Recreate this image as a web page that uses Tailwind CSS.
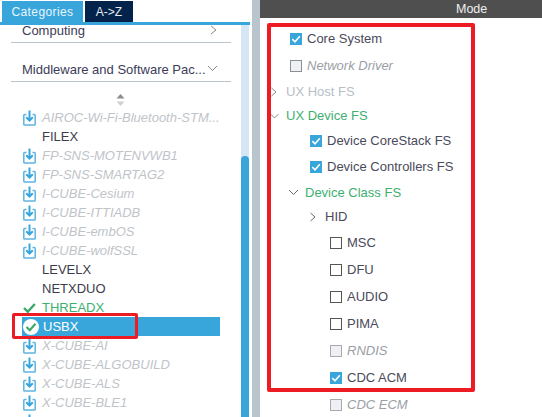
<!DOCTYPE html>
<html lang="en">
<head>
    <meta charset="UTF-8">
    <meta name="viewport" content="width=device-width, initial-scale=1.0">
    <title>Middleware</title>
    <script src="https://cdn.jsdelivr.net/npm/@tailwindcss/browser@4"></script>
</head>
<body class="bg-white">
<svg class="hidden">
    <symbol id="dl" viewBox="0 0 13 16">
        <path d="M3.5 4.5H1.7Q.8 4.5.8 5.4V14.2Q.8 15.1 1.7 15.1H11.3Q12.2 15.1 12.2 14.2V5.4Q12.2 4.5 11.3 4.5H9.5" fill="none" stroke="#5eb4e2" stroke-width="1.5"/>
        <path d="M6.5 0.5V10M3.2 7.2L6.5 10.6L9.8 7.2" fill="none" stroke="#38a6db" stroke-width="2"/>
    </symbol>
    <symbol id="tick" viewBox="0 0 12 12">
        <path d="M2.3 6.2L5 8.8L9.8 3.2" fill="none" stroke="#fff" stroke-width="1.6"/>
    </symbol>
</svg>
<div class="relative flex w-[542px] h-[417px] overflow-hidden font-['Liberation_Sans',Arial,sans-serif] text-[13px] text-[#4a4a5a]">

    <!-- left panel -->
    <div class="w-[252px] h-full flex flex-col shrink-0">
        <div class="h-[22px] flex items-end pl-[2px] gap-[2px] pt-[1px]">
            <div class="w-[81px] h-[21px] bg-[#38a6db] text-[#eaf5fb] text-[12px] tracking-[0.4px] flex items-center justify-center pt-[1px]">Categories</div>
            <div class="w-[48px] h-[21px] bg-[#03234b] text-[#e8edf3] text-[12px] flex items-center justify-center pt-[1px]">A-&gt;Z</div>
        </div>
        <div class="h-[3px] w-[250px] bg-[#38a6db]"></div>
        <div class="flex flex-1 min-h-0 w-[250px]">
            <div class="w-[241px] overflow-hidden">
                <div class="h-[18px] ml-[11px] w-[220px] border-b border-[#b8c5cc] flex items-start justify-between pr-[14px] text-[#3c3c58]">
                    <span class="pl-[11px] leading-[11px]">Computing</span>
                    <svg width="7" height="10" viewBox="0 0 7 10"><path d="M1 1L6 5L1 9" fill="none" stroke="#8a8a8a" stroke-width="1"/></svg>
                </div>
                <div class="h-[39px] ml-[11px] w-[220px] border-b border-[#b8c5cc] flex items-end justify-between pr-[13px] pb-[5px] text-[#3c3c58] whitespace-nowrap">
                    <span class="pl-[11px] leading-none">Middleware and Software Pac...</span>
                    <svg class="mb-[4px]" width="11" height="7" viewBox="0 0 11 7"><path d="M1 1L5.5 5.5L10 1" fill="none" stroke="#8a8a8a" stroke-width="1"/></svg>
                </div>
                <div class="h-[26px] flex items-start pt-[12px] pl-[116px]">
                    <svg width="9" height="12" viewBox="0 0 9 12"><path d="M4.5 0L8.5 4.5H.5Z" fill="#8c8c8c"/><path d="M4.5 12L8.5 7.5H.5Z" fill="#d0d0d0"/></svg>
                </div>
                <div class="flex flex-col w-[220px] text-[#c0c4c9] italic whitespace-nowrap [&>div]:h-[19px] [&>div]:flex [&>div]:items-center [&>div]:pl-[23px] [&>div]:gap-[6px]">
                    <div><svg width="13" height="16"><use href="#dl"/></svg><span>AIROC-Wi-Fi-Bluetooth-STM...</span></div>
                    <div class="not-italic text-[#3c3c4a]"><span class="pl-[19px]">FILEX</span></div>
                    <div><svg width="13" height="16"><use href="#dl"/></svg><span>FP-SNS-MOTENVWB1</span></div>
                    <div><svg width="13" height="16"><use href="#dl"/></svg><span>FP-SNS-SMARTAG2</span></div>
                    <div><svg width="13" height="16"><use href="#dl"/></svg><span>I-CUBE-Cesium</span></div>
                    <div><svg width="13" height="16"><use href="#dl"/></svg><span>I-CUBE-ITTIADB</span></div>
                    <div><svg width="13" height="16"><use href="#dl"/></svg><span>I-CUBE-embOS</span></div>
                    <div><svg width="13" height="16"><use href="#dl"/></svg><span>I-CUBE-wolfSSL</span></div>
                    <div class="not-italic text-[#3c3c4a]"><span class="pl-[19px]">LEVELX</span></div>
                    <div class="not-italic text-[#3c3c4a]"><span class="pl-[19px]">NETXDUO</span></div>
                    <div class="not-italic text-[#3db070]"><svg width="13" height="12" viewBox="0 0 13 12"><path d="M1 6L4.8 9.8L11.8 2" fill="none" stroke="#3da86a" stroke-width="2.4"/></svg><span>THREADX</span></div>
                    <div class="not-italic text-white bg-[#38a6db] !pl-[1px] ml-[22px] w-[198px] !gap-[4px]">
                        <svg width="16" height="16" viewBox="0 0 16 16"><circle cx="8" cy="8" r="8" fill="#fff"/><path d="M3.5 8L6.8 11.2L12.5 4.8" fill="none" stroke="#3da86a" stroke-width="2.2"/></svg>
                        <span>USBX</span>
                    </div>
                    <div><svg width="13" height="16"><use href="#dl"/></svg><span>X-CUBE-AI</span></div>
                    <div><svg width="13" height="16"><use href="#dl"/></svg><span>X-CUBE-ALGOBUILD</span></div>
                    <div><svg width="13" height="16"><use href="#dl"/></svg><span>X-CUBE-ALS</span></div>
                    <div><svg width="13" height="16"><use href="#dl"/></svg><span>X-CUBE-BLE1</span></div>
                    <div><svg width="13" height="16"><use href="#dl"/></svg><span>X-CUBE-BLE2</span></div>
                </div>
            </div>
            <!-- scrollbar -->
            <div class="w-[8px] bg-[#d6e6f4] pt-[131px]">
                <div class="h-full bg-[#38a6db] rounded-t-[4px]"></div>
            </div>
        </div>
    </div>

    <!-- divider -->
    <div class="w-[8px] h-full bg-[#b8c5cc] shrink-0"></div>

    <!-- right panel -->
    <div class="flex-1 flex flex-col">
        <div class="h-[18px] bg-[#4f4f4f] text-[#f0f0f0] text-[12.5px] flex items-center pl-[196px] shrink-0">Mode</div>
        <div class="pt-[7px] overflow-hidden [&>div]:flex [&>div]:items-center [&>div]:gap-[5px]">
            <div class="h-[27px] pl-[30px]">
                <span class="w-3 h-3 bg-[#38a6db] flex"><svg width="12" height="12"><use href="#tick"/></svg></span><span>Core System</span>
            </div>
            <div class="h-[27px] pl-[30px] text-[#9a9ea6] italic">
                <span class="w-3 h-3 bg-[#eef0f3] border border-[#8a8f96]"></span><span>Network Driver</span>
            </div>
            <div class="h-[25px] pl-[11px] !gap-[9px] text-[#b8bec6]">
                <svg width="6" height="10" viewBox="0 0 6 10"><path d="M.5 1L5 5L.5 9" fill="none" stroke="#8a8a8a"/></svg><span>UX Host FS</span>
            </div>
            <div class="h-[24px] pl-[10px] !gap-[7px] text-[#3db070]">
                <svg width="9" height="6" viewBox="0 0 9 6"><path d="M.5 1L4.5 5L8.5 1" fill="none" stroke="#8a8a8a"/></svg><span>UX Device FS</span>
            </div>
            <div class="h-[25px] pl-[50px]">
                <span class="w-3 h-3 bg-[#38a6db] flex"><svg width="12" height="12"><use href="#tick"/></svg></span><span>Device CoreStack FS</span>
            </div>
            <div class="h-[27px] pl-[50px]">
                <span class="w-3 h-3 bg-[#38a6db] flex"><svg width="12" height="12"><use href="#tick"/></svg></span><span>Device Controllers FS</span>
            </div>
            <div class="h-[25px] pl-[28px] !gap-[6px] text-[#3db070]">
                <svg width="11" height="7" viewBox="0 0 11 7"><path d="M1 1L5.5 5.5L10 1" fill="none" stroke="#6a6a6a"/></svg><span>Device Class FS</span>
            </div>
            <div class="h-[24px] pl-[50px] !gap-[9px]">
                <svg width="6" height="10" viewBox="0 0 6 10"><path d="M.5 1L5 5L.5 9" fill="none" stroke="#6a6a6a"/></svg><span>HID</span>
            </div>
            <div class="h-[27px] pl-[70px]"><span class="w-3 h-3 border border-[#555]"></span><span>MSC</span></div>
            <div class="h-[27px] pl-[70px]"><span class="w-3 h-3 border border-[#555]"></span><span>DFU</span></div>
            <div class="h-[27px] pl-[70px]"><span class="w-3 h-3 border border-[#555]"></span><span>AUDIO</span></div>
            <div class="h-[27px] pl-[70px]"><span class="w-3 h-3 border border-[#555]"></span><span>PIMA</span></div>
            <div class="h-[27px] pl-[70px] text-[#9a9ea6] italic"><span class="w-3 h-3 bg-[#eef0f3] border border-[#a8acb2]"></span><span>RNDIS</span></div>
            <div class="h-[27px] pl-[70px]"><span class="w-3 h-3 bg-[#38a6db] flex"><svg width="12" height="12"><use href="#tick"/></svg></span><span>CDC ACM</span></div>
            <div class="h-[27px] pl-[70px] text-[#9a9ea6] italic"><span class="w-3 h-3 bg-[#eef0f3] border border-[#a8acb2]"></span><span>CDC ECM</span></div>
        </div>
    </div>

    <!-- red annotation boxes drawn over the screenshot -->
    <div class="absolute left-[12px] top-[313px] w-[126px] h-[26px] border-[3px] border-[#ed1c24] rounded-[2px]"></div>
    <div class="absolute left-[267px] top-[23px] w-[208px] h-[369px] border-[4px] border-[#ed1c24] rounded-[2px]"></div>
</div>
</body>
</html>
